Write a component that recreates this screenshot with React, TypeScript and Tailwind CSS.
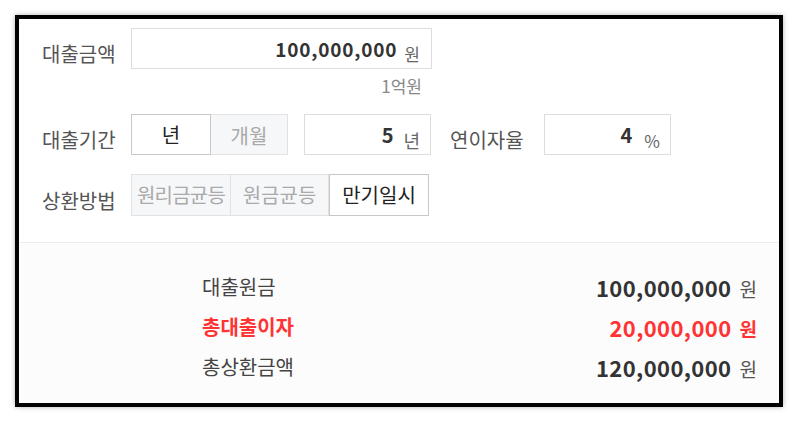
import React from "react";

const font = { fontFamily: '"Noto Sans CJK KR", "Noto Sans", sans-serif' };

function Label({ children, className = "" }: { children: React.ReactNode; className?: string }) {
  return <div className={`text-[20px] text-[#555] leading-none mt-[11px] ${className}`}>{children}</div>;
}

export default function App() {
  return (
    <div className="w-[800px] h-[424px] bg-white pt-[15px] pl-[15px]" style={font}>
      <div className="w-[768px] h-[392px] border-4 border-black bg-white shadow-[0_0_5px_rgba(0,0,0,0.3)] flex flex-col">
        {/* top form */}
        <div className="h-[224px] pt-[9px] pl-[23px] border-b border-[#eeeeee]">
          {/* row 1 */}
          <div className="flex items-center h-[41px]">
            <Label className="w-[89px]">대출금액</Label>
            <div className="w-[301px] h-[41px] border border-[#dddddd] flex items-center justify-end pr-[11px] gap-[7px]">
              <span className="text-[19px] font-bold text-[#333] leading-none tracking-[0.8px]">100,000,000</span>
              <span className="text-[17px] text-[#666] leading-none mt-[9px]">원</span>
            </div>
          </div>
          <div className="w-[390px] mt-[7px] h-[20px] flex justify-end pr-[10px] text-[17px] leading-[20px] text-[#888]">1억원</div>
          {/* row 2 */}
          <div className="flex items-center h-[41px] mt-[18px]">
            <Label className="w-[89px]">대출기간</Label>
            <div className="flex h-[41px]">
              <div className="w-[80px] h-full border border-[#c8c8c8] bg-white flex items-center justify-center text-[20px] text-[#222]">년</div>
              <div className="w-[77px] h-full border border-l-0 border-[#e2e2e2] bg-[#f6f7f9] flex items-center justify-center text-[20px] text-[#aaa] pt-[3px]">개월</div>
            </div>
            <div className="ml-[16px] w-[127px] h-[41px] border border-[#dddddd] flex items-center justify-end pr-[10px] gap-[10px]">
              <span className="text-[20px] font-bold text-[#333] leading-none">5</span>
              <span className="text-[18px] text-[#666] leading-none mt-[10px]">년</span>
            </div>
            <Label className="ml-[19px] w-[94px]">연이자율</Label>
            <div className="w-[127px] h-[41px] border border-[#dddddd] flex items-center justify-end pr-[10px] gap-[12px]">
              <span className="text-[20px] font-bold text-[#333] leading-none">4</span>
              <span className="text-[17px] text-[#666] leading-none mt-[12px]">%</span>
            </div>
          </div>
          {/* row 3 */}
          <div className="flex items-center h-[42px] mt-[19px]">
            <Label className="w-[89px]">상환방법</Label>
            <div className="flex h-[42px]">
              <div className="w-[100px] h-full border border-[#e2e2e2] bg-[#f6f7f9] flex items-center justify-center text-[20px] text-[#aaa] tracking-[-0.8px]">원리금균등</div>
              <div className="w-[98px] h-full border border-l-0 border-[#e2e2e2] bg-[#f6f7f9] flex items-center justify-center text-[20px] text-[#aaa]">원금균등</div>
              <div className="w-[100px] h-full border border-[#c8c8c8] bg-white flex items-center justify-center text-[20px] text-[#222]">만기일시</div>
            </div>
          </div>
        </div>
        {/* results */}
        <div className="flex-1 bg-[#fcfcfc] pt-[24px] pl-[183px] pr-[22px]">
          <div className="flex items-center justify-between h-[40px]">
            <span className="text-[20px] text-[#444]">대출원금</span>
            <span className="flex items-baseline gap-[8px]">
              <span className="text-[22px] font-bold text-[#333] tracking-[0.4px]">100,000,000</span>
              <span className="text-[19px] text-[#555]">원</span>
            </span>
          </div>
          <div className="flex items-center justify-between h-[40px]">
            <span className="text-[20px] font-bold text-[#ff3333]">총대출이자</span>
            <span className="flex items-baseline gap-[8px]">
              <span className="text-[22px] font-bold text-[#ff3333] tracking-[0.4px]">20,000,000</span>
              <span className="text-[19px] font-bold text-[#ff3333]">원</span>
            </span>
          </div>
          <div className="flex items-center justify-between h-[40px]">
            <span className="text-[20px] text-[#444]">총상환금액</span>
            <span className="flex items-baseline gap-[8px]">
              <span className="text-[22px] font-bold text-[#333] tracking-[0.4px]">120,000,000</span>
              <span className="text-[19px] text-[#555]">원</span>
            </span>
          </div>
        </div>
      </div>
    </div>
  );
}
